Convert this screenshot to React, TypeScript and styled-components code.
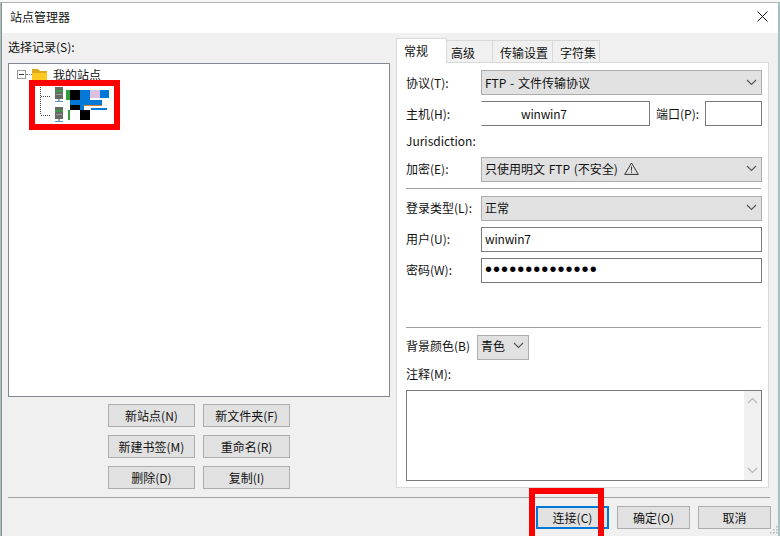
import React from "react";
import styled, { createGlobalStyle } from "styled-components";

const Global = createGlobalStyle`
  html, body { margin: 0; padding: 0; background: #fff; }
  * { box-sizing: border-box; }
`;

const Screen = styled.div`
  position: relative;
  width: 780px;
  height: 536px;
  overflow: hidden;
  font-family: "Noto Sans CJK SC", "Noto Sans", sans-serif;
  font-size: 12px;
  color: #111;
  background: linear-gradient(#f7f7f7 2px, #a4c2c4 2px);
  padding: 2px 2px 0 1px;
`;
const Win = styled.div`
  height: 534px;
  background: #f0f0f0;
  border-left: 1px solid #8f8f8f;
  border-top: 1px solid #b0b0b0;
  display: flex;
  flex-direction: column;
`;
const TitleBar = styled.div`
  height: 30px;
  flex: none;
  background: #fff;
  display: flex;
  align-items: center;
  justify-content: space-between;
  padding: 0 10px 4px 8px;
`;
const Body = styled.div`
  flex: 1;
  display: flex;
  flex-direction: column;
  padding: 0 6px 0 6px;
`;
const Columns = styled.div`
  display: flex;
  gap: 6px;
  height: 456px;
  flex: none;
`;
const Left = styled.div`
  width: 382px;
  display: flex;
  flex-direction: column;
`;
const LeftLabel = styled.div`
  height: 30px;
  line-height: 28px;
`;
const TreeBox = styled.div`
  width: 382px;
  height: 336px;
  background: #fff;
  border: 1px solid #828790;
  padding: 3px 0 0 8px;
`;
const TreeRoot = styled.div`
  display: flex;
  align-items: center;
  height: 16px;
`;
const Minus = styled.span`
  width: 9px;
  height: 9px;
  border: 1px solid #9a9a9a;
  position: relative;
  flex: none;
  background: #fff;
  &::after {
    content: "";
    position: absolute;
    left: 1px;
    right: 1px;
    top: 3px;
    height: 1px;
    background: #333;
  }
`;
const TreeDash = styled.span`
  width: 6px;
  border-top: 1px dotted #777;
  flex: none;
`;
const RootText = styled.span`
  margin-left: 6px;
  line-height: 16px;
`;
const LeftButtons = styled.div`
  display: grid;
  grid-template-columns: 87px 87px;
  grid-auto-rows: 23px;
  gap: 8px;
  justify-content: start;
  margin: 7px 0 0 100px;
`;
const Btn = styled.div<{ $primary?: boolean }>`
  height: 23px;
  width: ${(p) => (p.$primary ? "73px" : "auto")};
  background: #e1e1e1;
  border: ${(p) => (p.$primary ? "2px solid #0078d7" : "1px solid #adadad")};
  display: flex;
  align-items: center;
  justify-content: center;
  line-height: 1;
`;
const Right = styled.div`
  width: 373px;
  padding-top: 6px;
  display: flex;
  flex-direction: column;
`;
const Tabs = styled.div`
  display: flex;
  height: 24px;
  align-items: flex-end;
  flex: none;
  position: relative;
  z-index: 1;
  margin-bottom: -1px;
`;
const Tab = styled.div<{ $active?: boolean; $w: number; $pad: number }>`
  width: ${(p) => p.$w}px;
  height: ${(p) => (p.$active ? 25 : 23)}px;
  background: ${(p) => (p.$active ? "#fff" : "#f0f0f0")};
  border: 1px solid #d9d9d9;
  border-bottom: ${(p) => (p.$active ? "none" : "1px solid #d9d9d9")};
  border-left: ${(p) => (p.$active ? "1px solid #d9d9d9" : "none")};
  padding-left: ${(p) => p.$pad}px;
  line-height: 23px;
  white-space: nowrap;
`;
const Panel = styled.div`
  width: 373px;
  height: 426px;
  flex: none;
  background: #fff;
  border: 1px solid #d9d9d9;
  padding: 7px 6px 0 9px;
  display: flex;
  flex-direction: column;
`;
const Row = styled.div<{ $mt?: number; $lift?: number }>`
  display: flex;
  align-items: center;
  height: 25px;
  flex: none;
  margin-top: ${(p) => p.$mt ?? 0}px;
  & > * {
    padding-bottom: ${(p) => p.$lift ?? 0}px;
  }
`;
const Label = styled.div<{ $w?: number }>`
  width: ${(p) => p.$w ?? 75}px;
  flex: none;
  white-space: nowrap;
`;
const Select = styled.div<{ $w?: number }>`
  width: ${(p) => (p.$w ? p.$w + "px" : "281px")};
  height: 25px;
  background: #e1e1e1;
  border: 1px solid #adadad;
  display: flex;
  align-items: center;
  justify-content: space-between;
  padding-left: 3px;
  padding-right: 4px;
  gap: 4px;
`;
const SelectText = styled.span`
  display: inline-flex;
  align-items: center;
  gap: 6px;
  white-space: nowrap;
  word-spacing: 1px;
`;
const Input = styled.div<{ $w: number; $pad?: number; $cut?: boolean }>`
  width: ${(p) => p.$w}px;
  height: 25px;
  background: #fff;
  border: 1px solid #7a7a7a;
  ${(p) => (p.$cut ? "border-left-color: #fff;" : "")}
  display: flex;
  align-items: center;
  padding-left: ${(p) => p.$pad ?? 3}px;
  white-space: nowrap;
  letter-spacing: -0.2px;
`;
const Dots = styled.span`
  font-family: "Liberation Sans", sans-serif;
  font-size: 20px;
  letter-spacing: 1.05px;
  line-height: 1;
  color: #000;
`;
const PortLabel = styled.div`
  width: 55px;
  flex: none;
  padding-left: 6px;
  white-space: nowrap;
`;
const Divider = styled.div<{ $mt: number }>`
  height: 1px;
  width: 355px;
  flex: none;
  background: #a0a0a0;
  margin-top: ${(p) => p.$mt}px;
`;
const TextLine = styled.div<{ $mt: number }>`
  height: 18px;
  line-height: 18px;
  flex: none;
  margin-top: ${(p) => p.$mt}px;
`;
const NoteBox = styled.div`
  width: 356px;
  height: 91px;
  flex: none;
  margin-top: 7px;
  background: #fff;
  border: 1px solid #7a7a7a;
  display: flex;
  justify-content: flex-end;
`;
const ScrollBar = styled.div`
  width: 17px;
  background: #f0f0f0;
  display: flex;
  flex-direction: column;
  justify-content: space-between;
  align-items: center;
  padding: 6px 0;
`;
const BottomLine = styled.div`
  height: 1px;
  background: #a0a0a0;
  width: 762px;
  flex: none;
  margin-top: 8px;
`;
const Footer = styled.div`
  display: flex;
  justify-content: flex-end;
  gap: 8px;
  margin-top: 8px;
  width: 763px;
`;
const FootBtn = styled(Btn)`
  width: 73px;
`;
const Annotation = styled.div<{ $x: number; $y: number; $w: number; $h: number; $open?: boolean }>`
  position: absolute;
  left: ${(p) => p.$x}px;
  top: ${(p) => p.$y}px;
  width: ${(p) => p.$w}px;
  height: ${(p) => p.$h}px;
  border: 6px solid #fe0000;
  ${(p) => (p.$open ? "border-bottom: none;" : "")}
  pointer-events: none;
`;
const Grip = styled.svg`
  position: absolute;
  right: 2px;
  bottom: 2px;
`;

const Chevron = ({ up, color = "#555" }: { up?: boolean; color?: string }) => (
  <svg width="11" height="7" viewBox="0 0 11 7">
    <polyline points={up ? "1,6 5.5,1.5 10,6" : "1,1 5.5,5.5 10,1"} fill="none" stroke={color} strokeWidth="1.1" />
  </svg>
);

const Warn = () => (
  <svg width="15" height="13" viewBox="0 0 15 13">
    <path d="M7.5 1 L14.3 12.4 H0.7 Z" fill="none" stroke="#333" strokeWidth="1" />
    <path d="M7.5 4.5 V8.5 M7.5 9.5 V10.8" stroke="#333" strokeWidth="1" />
  </svg>
);

const Folder = () => (
  <svg width="15" height="13" viewBox="0 0 15 13">
    <path d="M0 1 H6 L8 3 H15 V13 H0 Z" fill="#dcaa1c" />
    <path d="M0 5 H15 V13 H0 Z" fill="#ffc820" />
  </svg>
);

const Server = ({ y }: { y: number }) => (
  <g transform={`translate(26 ${y})`}>
    <rect x="0" y="0" width="8" height="12" fill="#666b66" />
    <rect x="0" y="3" width="8" height="2" fill="#3c9a4a" />
    <rect x="1" y="7" width="6" height="1" fill="#9a9a9a" />
    <rect x="3" y="12" width="2" height="2" fill="#9aa6b0" />
    <rect x="0" y="14" width="8" height="1" fill="#5a96d2" />
  </g>
);

const TreeItems = () => (
  <svg width="100" height="48" viewBox="0 0 100 48" style={{ display: "block", marginLeft: 12 }}>
    <path d="M11.5 2 V32 M12 13.5 H22 M12 32.5 H22" stroke="#444" strokeWidth="1" strokeDasharray="1 1" fill="none" />
    <Server y={4} />
    <Server y={24} />
    <rect x="37" y="7" width="4" height="10" fill="#2f9e3a" />
    <rect x="41" y="7" width="10" height="10" fill="#000" />
    <rect x="51" y="7" width="10" height="13" fill="#0078d7" />
    <rect x="61" y="7" width="10" height="8" fill="#dcc0e0" />
    <rect x="71" y="7" width="9" height="8" fill="#0078d7" />
    <rect x="41" y="17" width="32" height="5" fill="#0078d7" />
    <rect x="41" y="22" width="32" height="1" fill="#d9822b" />
    <rect x="41" y="22" width="10" height="5" fill="#000" />
    <rect x="51" y="22" width="4" height="5" fill="#0078d7" />
    <rect x="39" y="27" width="2" height="10" fill="#2f9e3a" />
    <rect x="51" y="27" width="10" height="10" fill="#000" />
    <rect x="62" y="25" width="16" height="2" fill="#0078d7" />
  </svg>
);

export default function App() {
  return (
    <Screen>
      <Global />
      <Win>
        <TitleBar>
          <span>站点管理器</span>
          <svg width="11" height="11" viewBox="0 0 11 11">
            <path d="M0.5 0.5 L10.5 10.5 M10.5 0.5 L0.5 10.5" stroke="#111" strokeWidth="1" />
          </svg>
        </TitleBar>
        <Body>
          <Columns>
            <Left>
              <LeftLabel>选择记录(S):</LeftLabel>
              <TreeBox>
                <TreeRoot>
                  <Minus />
                  <TreeDash />
                  <Folder />
                  <RootText>我的站点</RootText>
                </TreeRoot>
                <TreeItems />
              </TreeBox>
              <LeftButtons>
                <Btn>新站点(N)</Btn>
                <Btn>新文件夹(F)</Btn>
                <Btn>新建书签(M)</Btn>
                <Btn>重命名(R)</Btn>
                <Btn>删除(D)</Btn>
                <Btn>复制(I)</Btn>
              </LeftButtons>
            </Left>
            <Right>
              <Tabs>
                <Tab $active $w={51} $pad={7}>常规</Tab>
                <Tab $w={46} $pad={4}>高级</Tab>
                <Tab $w={60} $pad={7}>传输设置</Tab>
                <Tab $w={47} $pad={7}>字符集</Tab>
              </Tabs>
              <Panel>
                <Row>
                  <Label>协议(T):</Label>
                  <Select>
                    <SelectText>FTP - 文件传输协议</SelectText>
                    <Chevron />
                  </Select>
                </Row>
                <Row $mt={6}>
                  <Label>主机(H):</Label>
                  <Input $w={169} $pad={39} $cut>winwin7</Input>
                  <PortLabel>端口(P):</PortLabel>
                  <Input $w={57} />
                </Row>
                <TextLine $mt={6}>Jurisdiction:</TextLine>
                <Row $mt={7} $lift={2}>
                  <Label>加密(E):</Label>
                  <Select>
                    <SelectText>只使用明文 FTP (不安全) <Warn /></SelectText>
                    <Chevron />
                  </Select>
                </Row>
                <Divider $mt={6} />
                <Row $mt={7} $lift={2}>
                  <Label>登录类型(L):</Label>
                  <Select>
                    <SelectText>正常</SelectText>
                    <Chevron />
                  </Select>
                </Row>
                <Row $mt={6} $lift={3}>
                  <Label>用户(U):</Label>
                  <Input $w={281}>winwin7</Input>
                </Row>
                <Row $mt={6} $lift={3}>
                  <Label>密码(W):</Label>
                  <Input $w={281}><Dots>••••••••••••••</Dots></Input>
                </Row>
                <Divider $mt={44} />
                <Row $mt={7} $lift={4}>
                  <Label $w={71}>背景颜色(B)</Label>
                  <Select $w={52}>
                    <SelectText>青色</SelectText>
                    <Chevron />
                  </Select>
                </Row>
                <TextLine $mt={5}>注释(M):</TextLine>
                <NoteBox>
                  <ScrollBar>
                    <Chevron up color="#b5b5b5" />
                    <Chevron color="#b5b5b5" />
                  </ScrollBar>
                </NoteBox>
              </Panel>
            </Right>
          </Columns>
          <BottomLine />
          <Footer>
            <Btn $primary>连接(C)</Btn>
            <FootBtn>确定(O)</FootBtn>
            <FootBtn>取消</FootBtn>
          </Footer>
        </Body>
      </Win>
      <Annotation $x={29} $y={80} $w={91} $h={50} />
      <Annotation $x={529} $y={488} $w={75} $h={48} $open />
      <Grip width="9" height="9" viewBox="0 0 9 9">
        <path d="M7 1h1.5v1.5H7zM4 4h1.5v1.5H4zM7 4h1.5v1.5H7zM1 7h1.5v1.5H1zM4 7h1.5v1.5H4zM7 7h1.5v1.5H7z" fill="#b5b5b5" />
      </Grip>
    </Screen>
  );
}
